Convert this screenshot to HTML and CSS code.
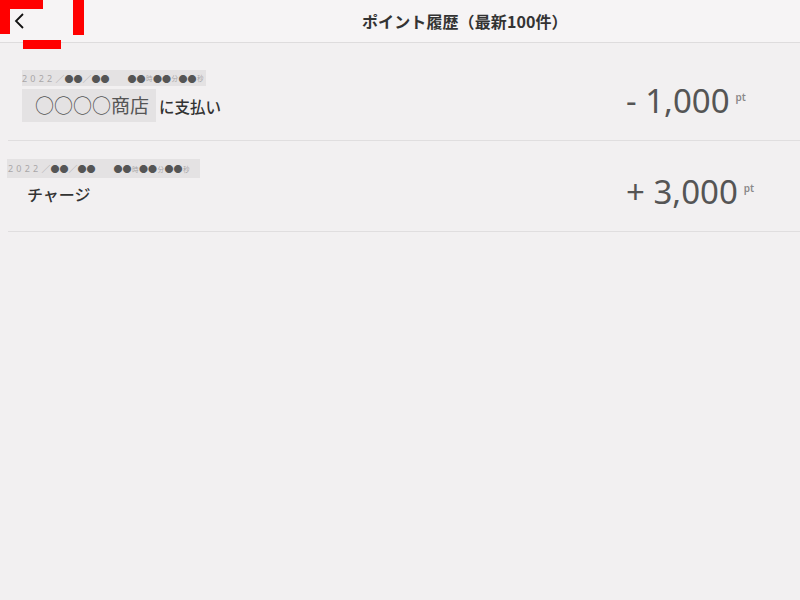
FILE: index.html
```html
<!DOCTYPE html>
<html lang="ja">
<head>
    <meta charset="UTF-8">
    <meta name="viewport" content="width=device-width, initial-scale=1.0">
    <title>ポイント履歴</title>
    <link rel="stylesheet" href="styles.css">
</head>
<body>
    <div class="header">
        <button class="back" aria-label="戻る">
            <svg width="14" height="18" viewBox="0 0 14 18"><polyline points="11,2 4,9 11,16" fill="none" stroke="#111" stroke-width="1.8"/></svg>
        </button>
        <h1 class="title">ポイント履歴（最新100件）</h1>
        <!-- tap target marker -->
        <div class="mark mark-top"></div>
        <div class="mark mark-left"></div>
        <div class="mark mark-right"></div>
        <div class="mark mark-bottom"></div>
    </div>

    <div class="list">
        <div class="row row-pay">
            <div class="info">
                <div class="date"><span class="num">2022</span><span class="sl">／</span><span class="dot">●●</span><span class="sl">／</span><span class="dot">●●</span><span class="sp"></span><span class="dot">●●</span><span class="unit">時</span><span class="dot">●●</span><span class="unit">分</span><span class="dot">●●</span><span class="unit">秒</span></div>
                <div class="desc"><span class="shop">○○○○商店</span><span class="label">に支払い</span></div>
            </div>
            <div class="amount">- 1,000<span class="pt">pt</span></div>
        </div>
        <div class="row row-charge">
            <div class="info">
                <div class="date"><span class="num">2022</span><span class="sl">／</span><span class="dot">●●</span><span class="sl">／</span><span class="dot">●●</span><span class="sp"></span><span class="dot">●●</span><span class="unit">時</span><span class="dot">●●</span><span class="unit">分</span><span class="dot">●●</span><span class="unit">秒</span></div>
                <div class="desc"><span class="label">チャージ</span></div>
            </div>
            <div class="amount">+ 3,000<span class="pt">pt</span></div>
        </div>
    </div>
</body>
</html>
```
FILE: styles.css
```css
body { margin: 0; background: #f2f0f1; font-family: "Noto Sans CJK JP", "Noto Sans", sans-serif; color: #333; height: 600px; }

.header { position: relative; height: 42px; background: #f6f4f5; border-bottom: 1px solid #dedcdd; display: flex; align-items: center; }
.back { background: none; border: none; padding: 0; margin-left: 12px; width: 14px; height: 18px; cursor: pointer; display: flex; }
.title { margin: 0 0 0 336px; font-size: 16px; font-weight: 700; color: #333; letter-spacing: 0.1px; }

.mark { position: absolute; background: #ff0000; }
.mark-top { left: 0; top: 0; width: 43px; height: 9px; }
.mark-left { left: 0; top: 0; width: 10px; height: 34px; }
.mark-right { left: 73px; top: 0; width: 11px; height: 35px; }
.mark-bottom { left: 23px; top: 40px; width: 38px; height: 9px; z-index: 1; }

.row { display: grid; grid-template-columns: 1fr 174px; margin-left: 8px; border-bottom: 1px solid #e0dedf; }
.row-pay { height: 97px; }
.row-charge { height: 90px; }

.info { display: flex; flex-direction: column; align-items: flex-start; }
.row-pay .info { padding: 27px 0 0 14px; }
.row-charge .info { padding: 18px 0 0 0; }

.date { background: #e4e2e3; height: 16px; display: flex; align-items: center; padding-right: 2px; white-space: nowrap; }
.row-charge .date { height: 19px; margin-left: -1px; padding-left: 1px; padding-right: 10px; }
.num { font-size: 9px; color: #a9a7a8; letter-spacing: 3.2px; font-family: "Noto Sans", sans-serif; }
.sl { font-size: 9px; color: #a9a7a8; }
.dot { font-size: 9px; color: #555; }
.unit { font-size: 6.5px; color: #a9a7a8; margin: 0 0.5px; }
.sp { width: 18px; }

.desc { display: flex; align-items: center; margin-top: 3px; }
.shop { background: #e4e2e3; font-size: 19px; color: #555; padding: 2px 7px 4px 13px; line-height: 27px; }
.label { font-size: 15.5px; font-weight: 500; color: #333; margin-left: 3px; }
.row-charge .desc { margin-top: 4px; }
.row-charge .label { font-size: 16px; margin-left: 19px; }

.amount { font-family: "Noto Sans", sans-serif; font-size: 33px; color: #555; line-height: 36px; white-space: nowrap; }
.row-pay .amount { margin-top: 36px; }
.row-charge .amount { margin-top: 29px; }
.pt { font-size: 10px; font-weight: 600; color: #8a8889; vertical-align: 12px; margin-left: 6px; }
```
